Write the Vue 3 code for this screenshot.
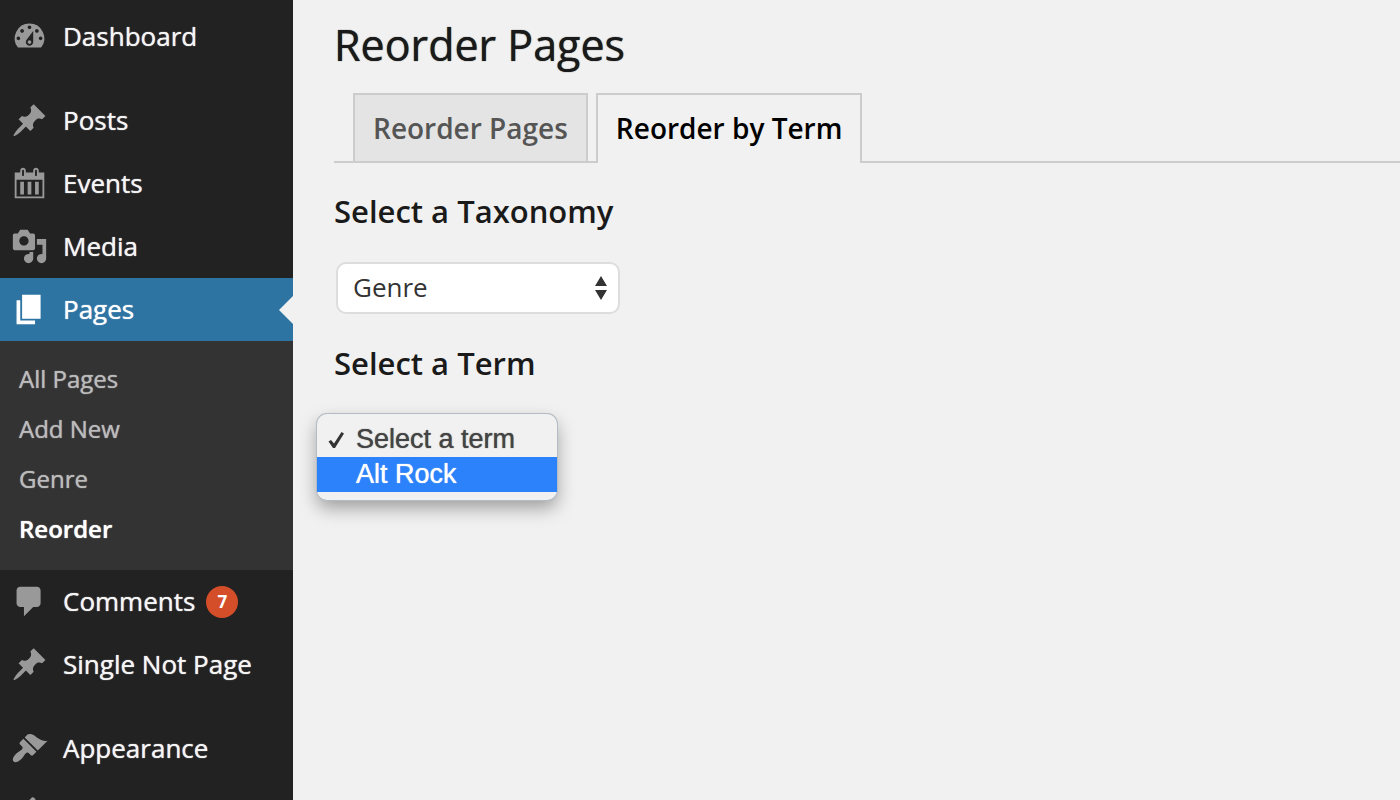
<script setup>
import { ref } from 'vue'

const icons = {
  dashboard:
    'M3.76 16h12.48A7.998 7.998 0 0 0 10 3a7.998 7.998 0 0 0-6.24 13zM10 4c.55 0 1 .45 1 1s-.45 1-1 1-1-.45-1-1 .45-1 1-1zM6 6c.55 0 1 .45 1 1s-.45 1-1 1-1-.45-1-1 .45-1 1-1zm8 0c.55 0 1 .45 1 1s-.45 1-1 1-1-.45-1-1 .45-1 1-1zm-5.37 5.55L12 7v6c0 1.1-.9 2-2 2s-2-.9-2-2c0-.57.24-1.08.63-1.45zM4 10c.55 0 1 .45 1 1s-.45 1-1 1-1-.45-1-1 .45-1 1-1zm12 0c.55 0 1 .45 1 1s-.45 1-1 1-1-.45-1-1 .45-1 1-1zm-6 2c-.55 0-1 .45-1 1s.45 1 1 1 1-.45 1-1-.45-1-1-1z',
  pin: 'M10.44 3.02l1.82-1.82 6.36 6.35-1.83 1.82c-1.05-.68-2.48-.57-3.41.36l-.75.75c-.92.93-1.04 2.35-.35 3.41l-1.83 1.82-2.41-2.41-2.8 2.79c-.42.42-3.38 2.71-3.8 2.29s1.86-3.39 2.28-3.81l2.79-2.79L4.1 9.36l1.83-1.82c1.05.69 2.48.57 3.4-.36l.75-.75c.93-.92 1.05-2.35.36-3.41z',
  calendar:
    'M15 4h3v14H2V4h3V3c0-.83.67-1.5 1.5-1.5S8 2.17 8 3v1h4V3c0-.83.67-1.5 1.5-1.5S15 2.17 15 3v1zM6 3v2.5c0 .28.22.5.5.5s.5-.22.5-.5V3c0-.28-.22-.5-.5-.5S6 2.72 6 3zm7 0v2.5c0 .28.22.5.5.5s.5-.22.5-.5V3c0-.28-.22-.5-.5-.5s-.5.22-.5.5zm4 14V8H3v9h14zM7 16V9H5v7h2zm4 0V9H9v7h2zm4 0V9h-2v7h2z',
  media:
    'M13 11V4c0-.55-.45-1-1-1h-1.67L9 1H5L3.67 3H2c-.55 0-1 .45-1 1v7c0 .55.45 1 1 1h10c.55 0 1-.45 1-1zM7 4.5c1.38 0 2.5 1.12 2.5 2.5S8.38 9.5 7 9.5 4.5 8.38 4.5 7 5.62 4.5 7 4.5zM14 6h5v10.5c0 1.38-1.12 2.5-2.5 2.5S14 17.88 14 16.5s1.12-2.5 2.5-2.5c.17 0 .34.02.5.05V9h-3V6zm-4 8.05V13h2v3.5c0 1.38-1.12 2.5-2.5 2.5S7 17.88 7 16.5 8.12 14 9.500 14c.17 0 .34.02.5.05z',
  pages: 'M6 15V2h10v13H6zm-1 1h8v2H3V5h2v11z',
  comments:
    'M5 2h9c1.1 0 2 .9 2 2v7c0 1.100-.9 2-2 2h-2l-5 5v-5H5c-1.100 0-2-.9-2-2V4c0-1.100.9-2 2-2z',
  brush:
    'M14.48 11.06L7.41 3.99l1.5-1.5c.5-.56 2.3-.47 3.51.32 1.21.8 1.43 1.28 2.91 2.1 1.18.64 2.45 1.26 4.45.85zm-.71.71L6.7 4.7 4.93 6.47c-.39.39-.39 1.02 0 1.41l1.06 1.06c.39.39.39 1.03 0 1.42-.6.6-1.43 1.11-2.21 1.69-.35.26-.7.53-1.01.84C1.43 14.23.4 16.08 1.4 17.07c.99 1 2.84-.03 4.18-1.36.31-.31.58-.66.85-1.02.57-.78 1.08-1.61 1.69-2.21.39-.39 1.02-.39 1.41 0l1.06 1.06c.39.39 1.02.39 1.41 0z',
  plug: 'M13.11 4.36L9.87 7.6 8 5.73l3.24-3.24c.35-.34 1.05-.2 1.56.32.52.51.66 1.21.31 1.55zm-8 1.77l.91-1.12 9.01 9.01-1.19.84c-.71.71-2.63 1.16-3.82 1.16H6.14L4.9 17.26c-.59.59-1.54.59-2.12 0-.59-.58-.59-1.53 0-2.12l1.24-1.24v-3.88c0-1.13.4-3.19 1.09-3.89zm7.26 3.97l3.24-3.24c.34-.35 1.04-.21 1.55.31.52.51.66 1.21.31 1.55l-3.24 3.25z'
}

const groups = [
  [{ label: 'Dashboard', icon: 'dashboard' }],
  [
    { label: 'Posts', icon: 'pin' },
    { label: 'Events', icon: 'calendar' },
    { label: 'Media', icon: 'media' },
    {
      label: 'Pages',
      icon: 'pages',
      current: true,
      children: ['All Pages', 'Add New', 'Genre', 'Reorder']
    },
    { label: 'Comments', icon: 'comments', count: 7 },
    { label: 'Single Not Page', icon: 'pin' }
  ],
  [
    { label: 'Appearance', icon: 'brush' },
    { label: 'Plugins', icon: 'plug', iconOnly: true }
  ]
]

const taxonomy = ref('Genre')
const terms = ['Select a term', 'Alt Rock']
const term = ref('Select a term')
const highlighted = ref('Alt Rock')
</script>

<template>
  <div class="admin">
    <nav class="sidebar" aria-label="Main menu">
      <ul v-for="(group, g) in groups" :key="g" class="group">
        <li v-for="item in group" :key="item.label">
          <a
            href="#"
            class="item"
            :class="{ current: item.current }"
            :aria-label="item.iconOnly ? item.label : undefined"
          >
            <svg class="icon" viewBox="0 0 20 20" aria-hidden="true">
              <path :d="icons[item.icon]" fill-rule="evenodd" />
            </svg>
            <span v-if="!item.iconOnly" class="label">{{ item.label }}</span>
            <span v-if="item.count" class="count">{{ item.count }}</span>
          </a>
          <ul v-if="item.children" class="submenu">
            <li v-for="child in item.children" :key="child">
              <a href="#" class="subitem" :class="{ active: child === 'Reorder' }">{{ child }}</a>
            </li>
          </ul>
        </li>
      </ul>
    </nav>

    <main class="content">
      <h1 class="title">Reorder Pages</h1>
      <nav class="tabs" aria-label="Reorder views">
        <a href="#" class="tab">Reorder Pages</a>
        <a href="#" class="tab selected" aria-current="page">Reorder by Term</a>
      </nav>

      <h2 class="heading"><label for="taxonomy">Select a Taxonomy</label></h2>
      <div class="select-box">
        <select id="taxonomy" v-model="taxonomy" class="select">
          <option>Genre</option>
        </select>
        <svg class="arrows" viewBox="0 0 12 24" aria-hidden="true">
          <path d="M6 0l6 10H0zM6 24L0 14h12z" />
        </svg>
      </div>

      <h2 id="term-heading" class="heading">Select a Term</h2>
      <div class="term-picker">
        <div class="popup" role="listbox" aria-labelledby="term-heading">
          <button
            v-for="name in terms"
            :key="name"
            type="button"
            role="option"
            class="option"
            :class="{ highlighted: name === highlighted }"
            :aria-selected="name === term"
            @click="term = name"
            @mouseenter="highlighted = name"
          >
            <span class="tick">
              <svg v-if="name === term" viewBox="0 0 18 18" aria-hidden="true">
                <path d="M1.500 10.500L4 9L7 12.500L14.500 1L17 2.500L8 17H6z" />
              </svg>
            </span>
            <span>{{ name }}</span>
          </button>
        </div>
      </div>
    </main>
  </div>
</template>

<style>
body {
  margin: 0;
  background: #f1f1f1;
}
</style>

<style scoped>
.admin {
  display: flex;
  height: 100vh;
  overflow: hidden;
  font-family: "Open Sans", sans-serif;
  font-size: 26px;
  background: #f1f1f1;
}

ul {
  list-style: none;
  margin: 0;
  padding: 0;
}

a {
  text-decoration: none;
}

.sidebar {
  display: flex;
  flex-direction: column;
  gap: 21px;
  flex: 0 0 293px;
  box-sizing: border-box;
  padding-top: 5px;
  background: #222;
}

.item {
  position: relative;
  display: flex;
  align-items: center;
  height: 63px;
  padding-left: 11px;
  color: #f5f5f5;
}

.label {
  padding-bottom: 2px;
  text-shadow: 0 0 1px currentColor;
}

.icon {
  width: 37px;
  height: 37px;
  margin-right: 15px;
  fill: #999;
}

.current {
  background: #2e74a3;
  color: #fff;
}

.current .icon {
  fill: #fff;
}

.current::after {
  content: "";
  position: absolute;
  right: 0;
  top: 50%;
  margin-top: -14px;
  border: 14px solid transparent;
  border-left-width: 0;
  border-right-color: #f1f1f1;
}

.count {
  width: 32px;
  height: 32px;
  margin-left: 11px;
  border-radius: 16px;
  background: #d54e2a;
  color: #fff;
  font-size: 17px;
  font-weight: 700;
  line-height: 32px;
  text-align: center;
}

.submenu {
  padding: 13px 0 16px;
  background: #333;
}

.subitem {
  display: block;
  padding-left: 19px;
  color: #bbb;
  font-size: 24px;
  line-height: 50px;
  text-shadow: 0 0 1px currentColor;
}

.subitem.active {
  color: #fff;
  font-weight: 600;
}

.content {
  flex: 1;
  min-width: 0;
  padding: 16px 0 0 41px;
  color: #1a1a1a;
}

.title {
  margin: 0 0 19px;
  font-size: 43px;
  font-weight: 400;
  line-height: 58px;
  text-shadow: 0 0 1px currentColor;
}

.tabs {
  display: flex;
  gap: 8px;
  padding-left: 19px;
  border-bottom: 2px solid #ccc;
}

.tab {
  padding: 0 18px;
  border: 2px solid #ccc;
  border-bottom: 0;
  background: #e4e4e4;
  color: #555;
  font-size: 28px;
  font-weight: 600;
  line-height: 66px;
}

.tab.selected {
  margin-bottom: -2px;
  padding-bottom: 2px;
  background: #f1f1f1;
  color: #000;
}

.heading {
  margin: 26px 0 29px;
  font-size: 31px;
  font-weight: 600;
  line-height: 44px;
}

.select-box {
  position: relative;
  width: 284px;
  margin: 0 0 27px 2px;
}

.select {
  display: block;
  appearance: none;
  width: 100%;
  height: 52px;
  padding: 0 40px 2px 15px;
  border: 2px solid #ddd;
  border-radius: 10px;
  background: #fff;
  color: #333;
  font-family: inherit;
  font-size: 26px;
}

.arrows {
  position: absolute;
  top: 14px;
  right: 13px;
  width: 12px;
  height: 24px;
  fill: #333;
  pointer-events: none;
}

.term-picker {
  position: relative;
  height: 52px;
}

.popup {
  position: absolute;
  top: 0;
  left: -17px;
  width: 240px;
  padding: 8px 0;
  border-radius: 10px;
  background: #f1f1f1;
  box-shadow: 0 0 0 1px #b3bcc4, 0 8px 18px rgba(0, 0, 0, 0.35);
}

.option {
  display: flex;
  align-items: center;
  width: 100%;
  height: 35px;
  padding: 0 10px;
  border: 0;
  background: transparent;
  color: #444;
  font-family: "Liberation Sans", sans-serif;
  font-size: 27px;
  text-align: left;
  text-shadow: 0 0 1px currentColor;
}

.option.highlighted {
  background: #2b82fa;
  color: #fff;
}

.tick {
  width: 29px;
  height: 18px;
}

.tick svg {
  display: block;
  width: 18px;
  height: 18px;
  fill: #333;
}
</style>
